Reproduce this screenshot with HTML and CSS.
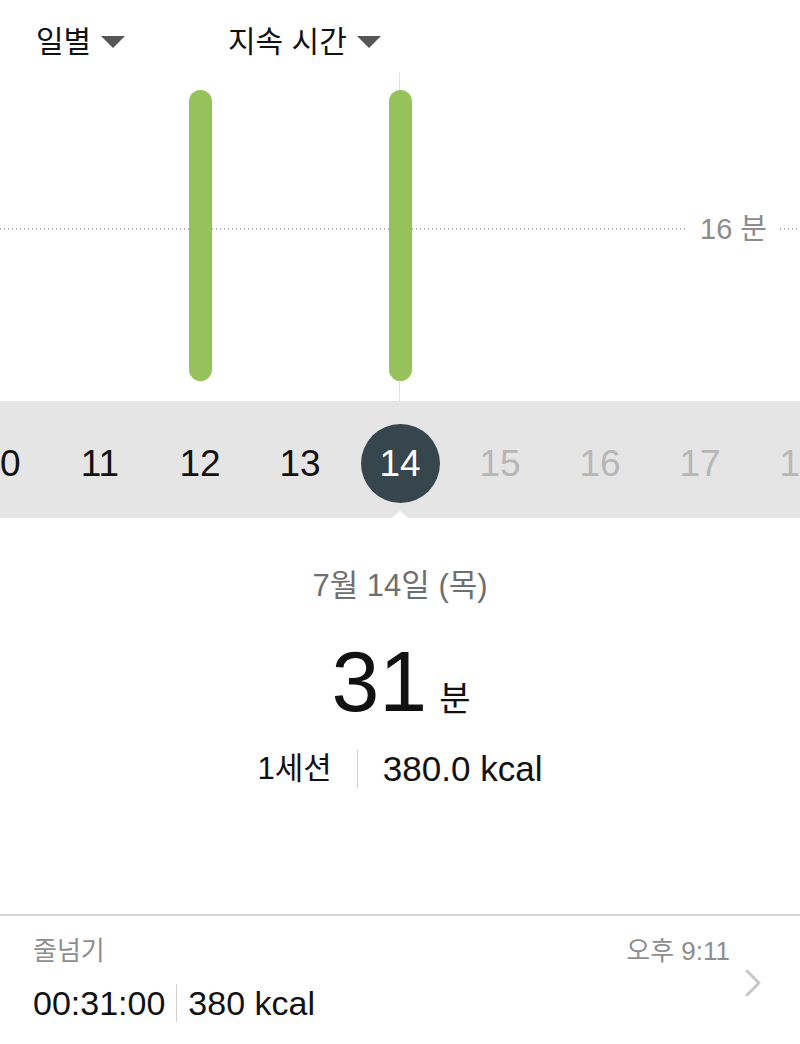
FILE: index.html
```html
<!doctype html>
<html lang="ko">
<head>
    <meta charset="utf-8">
    <meta name="viewport" content="width=device-width, initial-scale=1">
    <title>운동 기록</title>
    <link rel="stylesheet" href="styles.css">
</head>
<body>
<div id="app">
    <div class="filters">
        <div class="filter">일별 <span class="caret"></span></div>
        <div class="filter">지속 시간 <span class="caret"></span></div>
    </div>

    <div class="chart">
        <div class="goal-line"><span class="goal-label">16 분</span></div>
        <div class="cursor"></div>
        <div class="columns">
            <div class="col"></div>
            <div class="col"></div>
            <div class="col"><div class="bar" style="height: 291px"></div></div>
            <div class="col"></div>
            <div class="col"><div class="bar" style="height: 291px"></div></div>
            <div class="col"></div>
            <div class="col"></div>
            <div class="col"></div>
            <div class="col"></div>
        </div>
    </div>

    <div class="days">
        <div class="day">10</div>
        <div class="day">11</div>
        <div class="day">12</div>
        <div class="day">13</div>
        <div class="day selected"><span>14</span></div>
        <div class="day future">15</div>
        <div class="day future">16</div>
        <div class="day future">17</div>
        <div class="day future">18</div>
    </div>

    <div class="summary">
        <div class="date">7월 14일 (목)</div>
        <div class="total"><span class="num">31</span><span class="unit">분</span></div>
        <div class="stats">
            <span class="ko">1세션</span>
            <span class="sep"></span>
            <span>380.0 kcal</span>
        </div>
    </div>

    <div class="session">
        <div class="session-body">
            <div class="session-top">
                <span>줄넘기</span>
                <span>오후 9:11</span>
            </div>
            <div class="session-values">
                <span>00:31:00</span>
                <span class="sep"></span>
                <span>380 kcal</span>
            </div>
        </div>
        <svg class="chevron" width="18" height="30" viewBox="0 0 18 30">
            <polyline points="3,3 15,15 3,27" fill="none" stroke="#c8c8cc" stroke-width="3" stroke-linecap="round" stroke-linejoin="round"/>
        </svg>
    </div>
</div>
</body>
</html>
```

FILE: styles.css
```css
html, body {
    margin: 0;
    background: #fff;
}
body {
    font-family: "Liberation Sans", "Noto Sans CJK KR", sans-serif;
    color: #111;
}
#app {
    width: 800px;
    overflow: hidden;
}

/* top filter dropdowns */
.filters {
    display: flex;
    height: 70px;
    padding: 23px 0 0 36px;
    box-sizing: border-box;
}
.filter {
    display: flex;
    align-items: center;
    gap: 10px;
    min-width: 192px;
    height: 38px;
    font-size: 30px;
    line-height: 38px;
}
.caret {
    width: 0;
    height: 0;
    border-left: 12px solid transparent;
    border-right: 12px solid transparent;
    border-top: 12px solid #555;
}

/* bar chart */
.chart {
    position: relative;
    height: 331px;
}
.columns {
    display: grid;
    grid-template-columns: repeat(9, 100px);
    margin-left: -50px;
    height: 100%;
    padding-bottom: 20px;
    box-sizing: border-box;
    position: relative;
}
.col {
    display: flex;
    justify-content: center;
    align-items: flex-end;
}
.bar {
    width: 23px;
    border-radius: 12px;
    background: #97c25b;
}
.goal-line {
    position: absolute;
    left: 0;
    right: 0;
    top: 158px;
    height: 2px;
    background: repeating-linear-gradient(to right, #b4b4b4 0 1.5px, transparent 1.5px 4px);
}
.goal-label {
    position: absolute;
    left: 688px;
    top: -18px;
    padding: 0 12px;
    background: #fff;
    color: #8c8c8c;
    font-size: 29px;
    line-height: 38px;
}
.cursor {
    position: absolute;
    left: 399px;
    top: 2px;
    bottom: 0;
    width: 1px;
    background: #eadfcd;
}

/* day strip */
.days {
    position: relative;
    display: grid;
    grid-template-columns: repeat(9, 100px);
    margin-left: -50px;
    height: 117px;
    padding-top: 8px;
    box-sizing: border-box;
    background: #e5e5e5;
}
.days::after {
    content: "";
    position: absolute;
    left: 442px;
    bottom: 0;
    border-left: 8px solid transparent;
    border-right: 8px solid transparent;
    border-bottom: 7px solid #fff;
}
.day {
    display: flex;
    justify-content: center;
    align-items: center;
    font-size: 37px;
    color: #111;
}
.day.future {
    color: #b7b7b7;
}
.day.selected span {
    display: flex;
    justify-content: center;
    align-items: center;
    width: 79px;
    height: 79px;
    border-radius: 50%;
    background: #37454d;
    color: #fff;
}

/* selected day summary */
.summary {
    height: 398px;
    padding-top: 50px;
    box-sizing: border-box;
    text-align: center;
    border-bottom: 2px solid #d6d6d6;
}
.date {
    font-size: 31px;
    line-height: 36px;
    color: #6f6f6f;
}
.total {
    display: flex;
    justify-content: center;
    align-items: baseline;
    gap: 12px;
    margin-top: 34px;
    height: 86px;
    line-height: 86px;
}
.total .num {
    font-size: 86px;
    margin-left: 2px;
}
.total .unit {
    font-size: 34px;
}
.stats {
    display: flex;
    justify-content: center;
    align-items: center;
    margin-top: 25px;
    font-size: 35px;
    line-height: 40px;
}
.stats .ko {
    font-size: 31px;
}
.stats .sep {
    width: 1px;
    height: 38px;
    margin: 0 25px;
    background: #d2d2d2;
}

/* session list */
.session {
    display: flex;
    align-items: center;
    padding: 19px 38px 0 33px;
}
.session-body {
    flex: 1;
}
.session-top {
    display: flex;
    justify-content: space-between;
    font-size: 26px;
    line-height: 32px;
    color: #8e8e8e;
    padding-right: 14px;
}
.session-values {
    display: flex;
    align-items: center;
    margin-top: 16px;
    font-size: 34px;
    line-height: 40px;
}
.session-values .sep {
    width: 1px;
    height: 38px;
    margin: 0 11px;
    background: #d2d2d2;
}
.chevron {
    margin-top: 8px;
}
```
